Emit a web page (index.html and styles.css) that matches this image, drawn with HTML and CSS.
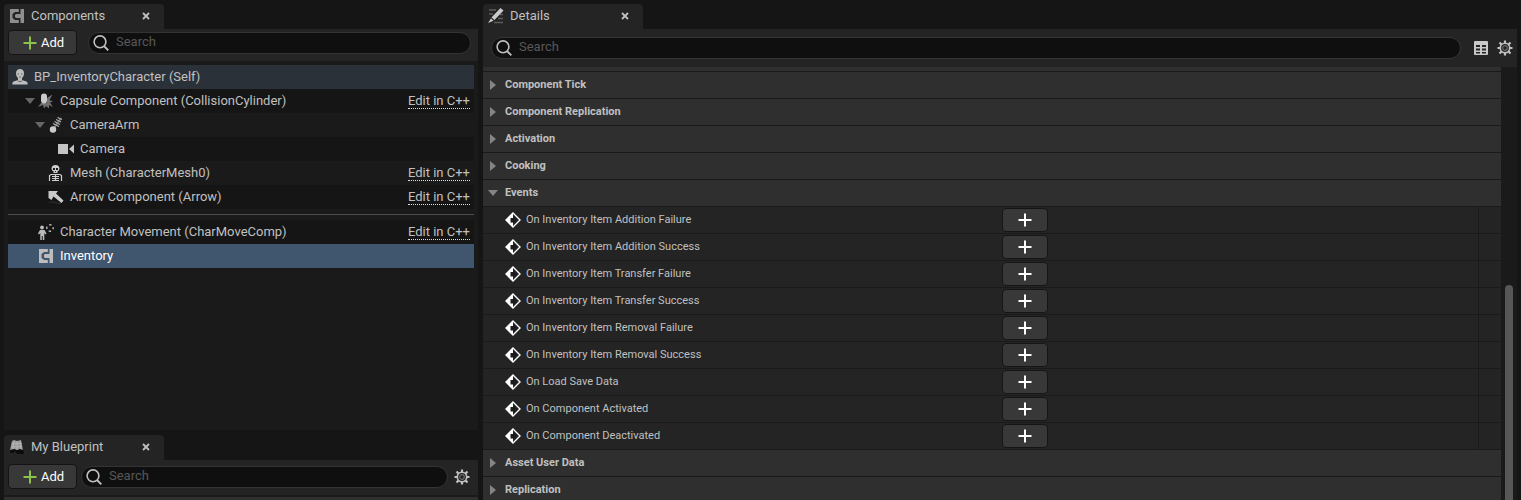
FILE: index.html
```html
<!DOCTYPE html>
<html lang="en">
<head>
<meta charset="utf-8">
<title>Blueprint Editor</title>
<link rel="stylesheet" href="styles.css">
</head>
<body>
<svg class="sprites" aria-hidden="true">
  <symbol id="plus" viewBox="0 0 14 14"><path d="M7 0.500V13.500M0.500 7H13.500" stroke="currentColor" stroke-width="2" fill="none"/></symbol>
  <symbol id="close" viewBox="0 0 8 8"><path d="M1 1L7 7M7 1L1 7" stroke="currentColor" stroke-width="1.800" fill="none"/></symbol>
  <symbol id="search" viewBox="0 0 16 16"><circle cx="7" cy="6.800" r="5.900" stroke="currentColor" stroke-width="1.600" fill="none"/><path d="M11 11L15.300 15.300" stroke="currentColor" stroke-width="1.900"/></symbol>
  <symbol id="gear" viewBox="0 0 16 16"><g stroke="currentColor" stroke-width="2.200"><path d="M8 .5V3.500M8 12.500V15.500M.5 8H3.500M12.500 8H15.500M2.500 2.500L4.800 4.800M11.200 11.200L13.500 13.500M13.500 2.500L11.200 4.800M4.800 11.200L2.500 13.500"/></g><circle cx="8" cy="8" r="4.700" fill="none" stroke="currentColor" stroke-width="1.600"/><circle cx="8" cy="8" r="2.300" fill="none" stroke="currentColor" stroke-width="1.200" opacity=".45"/></symbol>
  <symbol id="down" viewBox="0 0 12 12"><path d="M1 3H11L6 9Z" fill="currentColor"/></symbol>
  <symbol id="right" viewBox="0 0 12 12"><path d="M3 1V11L9 6Z" fill="currentColor"/></symbol>
  <symbol id="component" viewBox="0 0 14 14"><path fill="currentColor" fill-rule="evenodd" d="M0 0H14V14H0ZM8.800 0V3H5L2.500 5V9L5 11H8.800V14H10.500V9H6L5 8V6L6 5H10.500V0Z"/></symbol>
  <symbol id="event" viewBox="0 0 16 16"><path d="M8 1L15 8L8 15L1 8Z" fill="none" stroke="#fff" stroke-width="1.400"/><path d="M8 1V15L1 8Z" fill="#fff"/><path d="M5.500 6H8V4L12 8L8 12V10.500H5.500Z" fill="#1b1b1b"/></symbol>
</svg>
<main class="editor">
  <div class="sidebar">
    <section class="panel components">
      <header class="tab">
        <svg class="tab-icon dim"><use href="#component"/></svg>
        <h2>Components</h2>
        <button class="close" aria-label="Close Components"><svg><use href="#close"/></svg></button>
      </header>
      <div class="toolbar">
        <button class="add"><svg><use href="#plus"/></svg>Add</button>
        <label class="search"><svg><use href="#search"/></svg><input type="text" placeholder="Search" aria-label="Search components"></label>
      </div>
      <div class="tree-area">
        <ul class="tree">
          <li class="item root">
            <svg class="icon" viewBox="0 0 16 16"><path fill="#bdbdbd" d="M8 0C5.400 0 4 1.800 4 4.400C4 6.600 5 8 6 9V11L1.500 12.500C.6 13 .3 14 .3 15.500H15.700C15.700 14 15.400 13 14.500 12.500L10 11V9C11 8 12 6.600 12 4.400C12 1.800 10.600 0 8 0Z"/><path stroke="#666" fill="none" d="M5.500 5H7M9 5H10.500M7 8H9M5.500 11.500C7 13 9 13 10.500 11.500"/></svg>
            <span>BP_InventoryCharacter (Self)</span>
          </li>
          <li class="item level-1 shade">
            <button class="toggle" aria-label="Collapse Capsule Component"><svg><use href="#down"/></svg></button>
            <svg class="icon" viewBox="0 0 16 16"><path d="M3 10L0 14L5 12L6 15.500L8 13L11 15.500V12L15 14L12 9.500L15 8.500L11.500 7L14.500 1.500L9 5V10Z" fill="#707070"/><rect x="3" y="0.500" width="6" height="10" rx="3" fill="#cacaca"/></svg>
            <span>Capsule Component (CollisionCylinder)</span><a href="#">Edit in C++</a>
          </li>
          <li class="item level-2">
            <button class="toggle" aria-label="Collapse CameraArm"><svg><use href="#down"/></svg></button>
            <svg class="icon" viewBox="0 0 16 16"><path d="M6 11L13 1" stroke="#6a6a6a" stroke-width="2"/><path d="M5 6.500L11 9.500M6.500 4.500L12 7.500M8 2.500L13 5M9.500 .5L14 2.500" stroke="#b0b0b0" stroke-width="1.200"/><circle cx="5" cy="12.500" r="3.200" fill="#cacaca"/></svg>
            <span>CameraArm</span>
          </li>
          <li class="item level-3 shade">
            <svg class="icon" viewBox="0 0 16 16"><path d="M0 3H10V13H0ZM16 3.500V12.500L11 8Z" fill="#c4c4c4"/></svg>
            <span>Camera</span>
          </li>
          <li class="item level-2">
            <i class="toggle"></i>
            <svg class="icon" viewBox="0 0 16 16"><path fill="#d0d0d0" d="M7.500 0C5 0 3.500 1.500 3.500 3.800L4.500 6H5.500V8H9.500V6H10.500L11.500 3.800C11.500 1.500 10 0 7.500 0Z"/><path fill="#1a1a1a" d="M5 3H7V5H5ZM8 3H10V5H8ZM7 6H8V7H7Z"/><path d="M1.500 16V10.500L3 9.500H12L13.500 10.500V16M7.500 9V16M4 11.500H11M4 13.500H11M4 15.500H11" stroke="#d0d0d0" stroke-width="1.200" fill="none"/></svg>
            <span>Mesh (CharacterMesh0)</span><a href="#">Edit in C++</a>
          </li>
          <li class="item level-2 shade">
            <i class="toggle"></i>
            <svg class="icon" viewBox="0 0 16 16"><path d="M1 14C4 11 8 15 13 14.500" stroke="#333" fill="none"/><path fill="#cacaca" d="M0.500 2H10L8 4.500L15.500 11.500L13.500 14L5.500 7.500L3.500 11L0.500 9Z"/></svg>
            <span>Arrow Component (Arrow)</span><a href="#">Edit in C++</a>
          </li>
        </ul>
        <hr>
        <ul class="tree">
          <li class="item level-1 shade">
            <i class="toggle"></i>
            <svg class="icon" viewBox="0 0 16 16"><circle cx="4" cy="3.500" r="1.900" fill="#bbb"/><path fill="#bbb" d="M2 6H6.500L8.500 9.500L7.500 10.500L6.300 9V16H4.800V12H3.800V16H2.300V9L1 10.500L0 9.500Z"/><circle cx="12" cy="4" r="3.200" fill="none" stroke="#b0b0b0" stroke-width="1.500" stroke-dasharray="2.500 2.500" stroke-dashoffset="1.200"/></svg>
            <span>Character Movement (CharMoveComp)</span><a href="#">Edit in C++</a>
          </li>
          <li class="item level-1 selected">
            <i class="toggle"></i>
            <svg class="icon inset"><use href="#component"/></svg>
            <span>Inventory</span>
          </li>
        </ul>
      </div>
    </section>
    <section class="panel blueprint">
      <header class="tab">
        <svg class="tab-icon" viewBox="0 0 14 14"><path d="M1 8L0 13H3L5 11L7 14H14L13 8Z" fill="#0c0c0c"/><path fill="#999" d="M2 1L4 0L7 1L11 0L13 10L10 9L7 10L4 9L0 10Z"/><path d="M4 1L3 9M7 1V10M10 1L11 9M1.500 4L12 3.500M1 7L12 6.500" stroke="#bdbdbd" stroke-width=".7"/></svg>
        <h2>My Blueprint</h2>
        <button class="close" aria-label="Close My Blueprint"><svg><use href="#close"/></svg></button>
      </header>
      <div class="toolbar">
        <button class="add"><svg><use href="#plus"/></svg>Add</button>
        <label class="search"><svg><use href="#search"/></svg><input type="text" placeholder="Search" aria-label="Search blueprint"></label>
        <button class="tool" aria-label="Blueprint settings"><svg><use href="#gear"/></svg></button>
      </div>
      <div class="strip"></div>
    </section>
  </div>
  <section class="panel details">
    <header class="tab">
      <svg class="tab-icon wide" viewBox="0 0 16 16"><path d="M1 2H8M1 6H5M10 10.500H15M6 14.500H15M12 6.500H15" stroke="#5c5c5c" stroke-width="1.400"/><path fill="#cacaca" d="M12.500 0L15.500 2.500L6.500 12L3.500 9.500ZM3 10.500L5.500 12.800L0 15Z"/></svg>
      <h2>Details</h2>
      <button class="close" aria-label="Close Details"><svg><use href="#close"/></svg></button>
    </header>
    <div class="toolbar">
      <label class="search"><svg><use href="#search"/></svg><input type="text" placeholder="Search" aria-label="Search details"></label>
      <button class="tool" aria-label="Property matrix"><svg viewBox="0 0 16 16"><rect x="1" y="1" width="14" height="14" rx="1" fill="#c8c8c8"/><path fill="#242424" d="M3 5H7V7H3ZM9 5H13V7H9ZM3 8.500H7V10.500H3ZM9 8.500H13V10.500H9ZM3 12H7V13.500H3ZM9 12H13V13.500H9Z"/></svg></button>
      <button class="tool" aria-label="Details settings"><svg><use href="#gear"/></svg></button>
    </div>
    <div class="details-body">
      <div class="properties">
        <div class="stub"></div>
        <button class="category"><svg><use href="#right"/></svg>Component Tick</button>
        <button class="category"><svg><use href="#right"/></svg>Component Replication</button>
        <button class="category"><svg><use href="#right"/></svg>Activation</button>
        <button class="category"><svg><use href="#right"/></svg>Cooking</button>
        <button class="category"><svg><use href="#down"/></svg>Events</button>
        <div class="event"><span class="name"><svg><use href="#event"/></svg>On Inventory Item Addition Failure</span><span class="value"><button aria-label="Add On Inventory Item Addition Failure"><svg><use href="#plus"/></svg></button></span></div>
        <div class="event"><span class="name"><svg><use href="#event"/></svg>On Inventory Item Addition Success</span><span class="value"><button aria-label="Add On Inventory Item Addition Success"><svg><use href="#plus"/></svg></button></span></div>
        <div class="event"><span class="name"><svg><use href="#event"/></svg>On Inventory Item Transfer Failure</span><span class="value"><button aria-label="Add On Inventory Item Transfer Failure"><svg><use href="#plus"/></svg></button></span></div>
        <div class="event"><span class="name"><svg><use href="#event"/></svg>On Inventory Item Transfer Success</span><span class="value"><button aria-label="Add On Inventory Item Transfer Success"><svg><use href="#plus"/></svg></button></span></div>
        <div class="event"><span class="name"><svg><use href="#event"/></svg>On Inventory Item Removal Failure</span><span class="value"><button aria-label="Add On Inventory Item Removal Failure"><svg><use href="#plus"/></svg></button></span></div>
        <div class="event"><span class="name"><svg><use href="#event"/></svg>On Inventory Item Removal Success</span><span class="value"><button aria-label="Add On Inventory Item Removal Success"><svg><use href="#plus"/></svg></button></span></div>
        <div class="event"><span class="name"><svg><use href="#event"/></svg>On Load Save Data</span><span class="value"><button aria-label="Add On Load Save Data"><svg><use href="#plus"/></svg></button></span></div>
        <div class="event"><span class="name"><svg><use href="#event"/></svg>On Component Activated</span><span class="value"><button aria-label="Add On Component Activated"><svg><use href="#plus"/></svg></button></span></div>
        <div class="event"><span class="name"><svg><use href="#event"/></svg>On Component Deactivated</span><span class="value"><button aria-label="Add On Component Deactivated"><svg><use href="#plus"/></svg></button></span></div>
        <button class="category"><svg><use href="#right"/></svg>Asset User Data</button>
        <button class="category"><svg><use href="#right"/></svg>Replication</button>
      </div>
      <div class="scrollbar"><div class="thumb"></div></div>
    </div>
  </section>
</main>
</body>
</html>
```
FILE: styles.css
```css
* { box-sizing: border-box; }
body { margin: 0; background: #151515; color: #c0c0c0; font: 13px/16px Roboto, sans-serif; }
button { font: inherit; color: inherit; background: none; border: 0; padding: 0; }
svg { display: block; flex: none; width: 16px; height: 16px; }
.sprites { display: none; }

.editor { display: grid; grid-template-columns: minmax(0, 474fr) minmax(0, 1034fr); gap: 5px; height: 100vh; padding: 4px 4px 0; overflow: hidden; }
.sidebar { display: flex; flex-direction: column; gap: 5px; min-height: 0; }
.panel { display: flex; flex-direction: column; min-width: 0; min-height: 0; }
.components { flex: 1; }

.tab { display: flex; align-items: center; align-self: flex-start; width: 160px; height: 25px; padding: 0 14px 2px 6px; background: #242424; border-radius: 4px 4px 0 0; }
.tab h2 { flex: 1; margin: 0 0 0 7px; font-size: 13px; font-weight: 400; }
.tab-icon { width: 14px; height: 14px; }
.tab-icon.wide { width: 16px; height: 16px; }
.tab-icon.dim { color: #8e8e8e; }
.details .tab { padding-left: 5px; }
.details .tab h2 { margin-left: 6px; }
.close svg { width: 8px; height: 8px; }

.toolbar { display: flex; align-items: center; background: #242424; padding: 1px 7px 6px 4px; }
.add { display: flex; align-items: center; gap: 4px; width: 69px; height: 25px; padding-left: 14px; border: 1px solid #141414; border-radius: 4px; background: #383838; color: #fff; }
.add svg { width: 14px; height: 14px; color: #8bc24a; }
.search { display: flex; flex: 1; align-items: center; gap: 7px; min-width: 0; height: 22px; margin-left: 11px; padding-left: 4px; border: 1px solid #343434; border-radius: 11px; background: #0f0f0f; }
.search input { flex: 1; min-width: 0; padding: 0 0 2px; border: 0; outline: 0; background: none; color: #c0c0c0; font: inherit; }
.search input::placeholder { color: #575757; opacity: 1; }
.blueprint .toolbar { padding: 4px 8px 6px 4px; }
.blueprint .search { margin: 0 6px 0 4px; }
.details .toolbar { gap: 8px; padding: 8px 4px 8px 8px; }
.details .search { margin: 0 4px 0 0; }

.tree-area { flex: 1; min-height: 0; padding: 4px 4px 0; background: #1a1a1a; overflow: hidden; }
.tree { margin: 0; padding: 0; list-style: none; }
.item { display: flex; align-items: center; height: 24px; padding-right: 4px; }
.item span { flex: 1; margin-left: 6px; white-space: nowrap; }
.item a { color: inherit; line-height: 15px; text-decoration: none; border-bottom: 1px dotted #e0e0e0; }
.root { padding-left: 4px; background: #2b3139; }
.level-1 { padding-left: 16px; }
.level-2 { padding-left: 26px; }
.level-3 { padding-left: 50px; }
.shade { background: #151515; }
.selected { background: #40566f; color: #fff; }
.toggle { width: 12px; margin-right: 2px; color: #666; }
.toggle svg { width: 12px; height: 12px; }
.icon.inset { padding: 1px; color: #bdbdbd; }
hr { height: 1px; margin: 5px 0; border: 0; background: #4d4d4d; }

.strip { height: 5px; border-top: 2px solid #1a1a1a; background: #2f2f2f; }

.details-body { display: flex; flex: 1; min-height: 0; background: #1a1a1a; }
.properties { flex: 1; min-width: 0; overflow: hidden; }
.stub { height: 5px; background: #2f2f2f; border-bottom: 1px solid #1a1a1a; }
.category { display: flex; align-items: center; gap: 6px; width: 100%; height: 27px; padding-left: 4px; border-bottom: 1px solid #1a1a1a; background: #2f2f2f; font-size: 11px; font-weight: 700; }
.category svg { width: 12px; height: 12px; color: #858585; }
.event { display: grid; grid-template-columns: minmax(0, 519fr) minmax(0, 477fr) 22px; align-items: stretch; height: 27px; border-bottom: 1px solid #1a1a1a; background: #242424; font-size: 11px; }
.name { display: flex; align-items: center; gap: 5px; padding-left: 22px; white-space: nowrap; }
.value { display: flex; align-items: center; border-right: 1px solid #1a1a1a; }
.value button { display: grid; place-items: center; width: 46px; height: 24px; border: 1px solid #151515; border-radius: 4px; background: #383838; color: #fff; }
.value svg { width: 14px; height: 14px; }
.scrollbar { width: 16px; padding: 218px 4px 0; }
.thumb { height: 100%; border-radius: 4px 4px 0 0; background: #575757; }
```
